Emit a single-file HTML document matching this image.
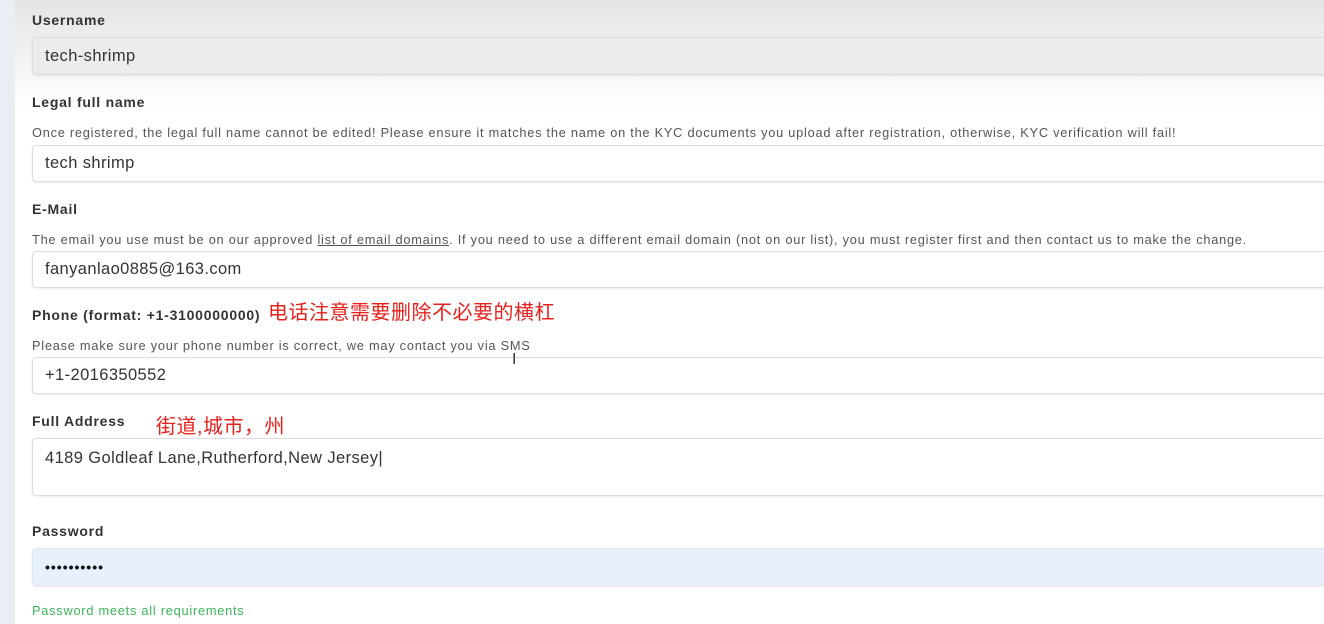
<!DOCTYPE html>
<html><head><meta charset="utf-8"><style>
body{margin:0;width:1324px;height:624px;overflow:hidden;font-family:"Liberation Sans","Noto Sans CJK SC",sans-serif;background:#fff;position:relative}
.strip{position:absolute;left:0;top:0;width:15px;height:624px;background:#e9edf4}
.topg{position:absolute;left:15px;top:0;right:0;height:110px;background:linear-gradient(#e4e4e4,#fff)}
.a{position:absolute;white-space:nowrap;line-height:16px}
.lb{font-size:14px;font-weight:bold;color:#333;left:32px;letter-spacing:.75px}
.hp{font-size:12.8px;color:#555;left:32px;letter-spacing:.75px}
.in{position:absolute;left:32px;width:1300px;border:1px solid #ddd;border-radius:4px;background:#fff;box-shadow:0 1px 2px rgba(0,0,0,.08);box-sizing:border-box;font-size:16.5px;color:#333;padding-left:12px;letter-spacing:.4px}
.red{color:#e8201c;font-size:20px;line-height:20px;letter-spacing:.5px}
</style></head><body>
<div class="strip"></div><div class="topg"></div>
<div class="a lb" style="top:12px">Username</div>
<div class="in" style="top:37px;height:38px;line-height:37px;background:#ececec">tech-shrimp</div>
<div class="a lb" style="top:94px">Legal full name</div>
<div class="a hp" style="top:125px">Once registered, the legal full name cannot be edited! Please ensure it matches the name on the KYC documents you upload after registration, otherwise, KYC verification will fail!</div>
<div class="in" style="top:145px;height:37px;line-height:35px">tech shrimp</div>
<div class="a lb" style="top:201px">E-Mail</div>
<div class="a hp" style="top:232px">The email you use must be on our approved <u>list of email domains</u>. If you need to use a different email domain (not on our list), you must register first and then contact us to make the change.</div>
<div class="in" style="top:251px;height:37px;line-height:35px">fanyanlao0885@163.com</div>
<div class="a lb" style="top:307px">Phone (format: +1-3100000000)</div>
<div class="a red" style="left:268px;top:303px">电话注意需要删除不必要的横杠</div>
<div class="a hp" style="top:338px">Please make sure your phone number is correct, we may contact you via SMS</div>
<div class="in" style="top:357px;height:37px;line-height:35px">+1-2016350552</div>
<div class="a" style="left:512px;top:352px;font-size:16px;color:#333">I</div>
<div class="a lb" style="top:413px">Full Address</div>
<div class="a red" style="left:156px;top:417px">街道,城市，州</div>
<div class="in" style="top:438px;height:58px;padding-top:8px;line-height:22px">4189 Goldleaf Lane,Rutherford,New Jersey|</div>
<div class="a lb" style="top:523px">Password</div>
<div class="in" style="top:548px;height:38px;line-height:36px;background:#e8f0fe;border-color:#e0e6f0;color:#111;font-size:14px;font-weight:bold;letter-spacing:1px">••••••••••</div>
<div class="a hp" style="top:603px;color:#3cb55a">Password meets all requirements</div>
</body></html>
